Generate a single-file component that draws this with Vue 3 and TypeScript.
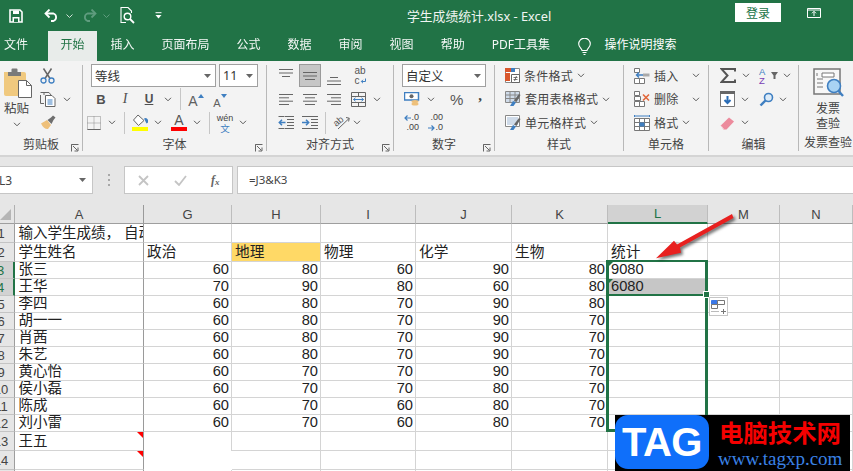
<script setup lang="ts">
import { h } from 'vue'

const Chev = () =>
  h('svg', { class: 'chev', width: 8, height: 5, viewBox: '0 0 8 5' }, [
    h('path', { d: 'M1 .8 4 3.8 7 .8', fill: 'none', stroke: '#5a5a5a', 'stroke-width': 1 }),
  ])
const Drop = () =>
  h('svg', { class: 'drop', width: 7, height: 4, viewBox: '0 0 7 4' }, [
    h('path', { d: 'M0 0h7L3.5 4z', fill: '#666' }),
  ])
const Exp = () =>
  h('svg', { class: 'exp', width: 8, height: 8, viewBox: '0 0 8 8' }, [
    h('path', { d: 'M.5 3V.5H7.5M.5 .5V7.5M2 2 6.5 6.5M3.5 7H7V3.5', fill: 'none', stroke: '#666', 'stroke-width': 1 }),
  ])

const tabs = ['插入', '页面布局', '公式', '数据', '审阅', '视图', '帮助', 'PDF工具集']
const columns = ['G', 'H', 'I', 'J', 'K', 'L', 'M', 'N']

interface Row { n: number; name: string; v: (number | string)[] }
const scores: [string, number[]][] = [
  ['张三', [60, 80, 60, 90, 80]],
  ['王华', [70, 90, 80, 60, 80]],
  ['李四', [60, 80, 70, 90, 80]],
  ['胡一一', [60, 80, 70, 90, 70]],
  ['肖茜', [60, 80, 70, 90, 70]],
  ['朱艺', [60, 80, 70, 90, 70]],
  ['黄心怡', [60, 70, 70, 90, 70]],
  ['侯小磊', [60, 70, 70, 80, 70]],
  ['陈成', [60, 70, 60, 80, 70]],
  ['刘小雷', [60, 70, 60, 80, 70]],
]
const rows: Row[] = scores.map(([name, v], i) => ({ n: i + 3, name, v }))
const heads = ['政治', '地理', '物理', '化学', '生物', '统计']
</script>

<template>
  <div class="app">
    <header class="titlebar">
      <div class="qa">
        <svg class="q-save" width="14" height="14" viewBox="0 0 14 14"><path d="M1 1h10l2 2v10H1z" fill="none" stroke="#fff" stroke-width="1.6"/><path d="M4 1.5h6v3.5H4zM3.5 8h7v5h-7z" fill="#fff"/><path d="M5 9.5h4v3.5H5z" fill="#217346"/></svg>
        <svg class="q-undo" width="15" height="13" viewBox="0 0 15 13"><path d="M2 4.5h7.5a4 4 0 0 1 0 7.5H7" fill="none" stroke="#fff" stroke-width="1.8"/><path d="M5.5 .5 1.5 4.5l4 4" fill="none" stroke="#fff" stroke-width="1.8"/></svg>
        <svg class="q-c1" width="7" height="4" viewBox="0 0 7 4"><path d="M.5 .5 3.5 3.5 6.5 .5" fill="none" stroke="#cfe0d6"/></svg>
        <svg class="q-redo" width="15" height="13" viewBox="0 0 15 13"><path d="M13 4.5H5.5a4 4 0 0 0 0 7.5H8" fill="none" stroke="#5f9c7e" stroke-width="1.8"/><path d="M9.500 .5l4 4-4 4" fill="none" stroke="#5f9c7e" stroke-width="1.8"/></svg>
        <svg class="q-c2" width="7" height="4" viewBox="0 0 7 4"><path d="M.5 .5 3.5 3.5 6.5 .5" fill="none" stroke="#5f9c7e"/></svg>
        <svg class="q-prev" width="15" height="17" viewBox="0 0 15 17"><path d="M6 15.500H1V.5h7l3.500 3.500v2" fill="none" stroke="#fff" stroke-width="1.1"/><circle cx="7.500" cy="9.500" r="3.300" fill="none" stroke="#fff" stroke-width="1.4"/><path d="M10 12l4 4" stroke="#fff" stroke-width="1.8"/></svg>
        <svg class="q-cust" width="7" height="7" viewBox="0 0 7 7"><path d="M.5 .7h6" stroke="#fff"/><path d="M.5 3h6L3.500 6.500z" fill="#fff"/></svg>
      </div>
      <div class="doc">学生成绩统计.xlsx  -  Excel</div>
      <button class="login">登录</button>
      <svg class="win" width="14" height="10" viewBox="0 0 14 10"><path d="M.5 .5h13v9H.5zM.5 2h13M7 8V3.500M5 5.300l2-2 2 2" fill="none" stroke="#fff"/></svg>
    </header>

    <nav class="tabs">
      <span class="tab first">文件</span>
      <span class="tab active">开始</span>
      <span v-for="t in tabs" :key="t" class="tab">{{ t }}</span>
      <svg class="bulb" width="13" height="18" viewBox="0 0 13 18"><path d="M4 12.500c0-2-3.300-3.300-3.300-6.500a5.800 5.800 0 0 1 11.600 0c0 3.200-3.300 4.500-3.300 6.500zM4.500 14.500h4M5.500 16.500h2" fill="none" stroke="#fff" stroke-width="1.1"/></svg>
      <span class="search">操作说明搜索</span>
    </nav>

    <section class="ribbon">
      <!-- clipboard -->
      <div class="group g-clip">
        <div class="body clip">
          <div class="paste">
            <svg width="30" height="33" viewBox="0 0 30 33"><path d="M3 6h20a2 2 0 0 1 2 2v22H5a2 2 0 0 1-2-2z" transform="translate(-2 0)" fill="#f0c97f"/><path d="M5 10V6h3.500V3.500a1 1 0 0 1 1-1h4a1 1 0 0 1 1 1V6H18v4z" fill="#7a7a7a"/><path d="M15.500 14.500h8l5 5v12h-13z" fill="#fff" stroke="#666"/><path d="M23.500 14.500v5h5" fill="none" stroke="#666"/></svg>
            <span class="paste-t">粘贴</span>
            <Chev />
          </div>
          <div class="tools">
            <div class="tl"><svg width="15" height="16" viewBox="0 0 15 16"><path d="M3.500 .5 10 10.500M11.500 .5 5 10.500" stroke="#666" stroke-width="1.5"/><circle cx="3.500" cy="12.500" r="2.500" fill="none" stroke="#3f7fc1" stroke-width="1.3"/><circle cx="11.500" cy="12.500" r="2.500" fill="none" stroke="#3f7fc1" stroke-width="1.3"/></svg></div>
            <div class="tl"><svg width="16" height="15" viewBox="0 0 16 15"><path d="M4 3V.5h5L11 3M4 11.500H.5V3" fill="none" stroke="#666"/><path d="M.5 .5h4M5.500 3.500h6.500l3 3v8H5.500z" fill="#fff" stroke="#666"/><path d="M7.500 8h5M7.500 10h5M7.500 12h5" stroke="#3f7fc1"/></svg><Chev class="cml" /></div>
            <div class="tl"><svg width="16" height="15" viewBox="0 0 16 15"><path d="M1 8.500 7 5l4 5-3 4c-2 .5-5-1-7-5.500z" fill="#eec07a"/><path d="M7.500 5 11 2.500 13 .5l2.500 2-2 2.500-2 4z" fill="#6e6e6e"/></svg></div>
          </div>
        </div>
        <div class="lbl"><i /><span>剪贴板</span><Exp /></div>
      </div>
      <div class="vsep" />

      <!-- font -->
      <div class="group g-font">
        <div class="body rows">
          <div class="row r-font">
            <div class="select s-name"><span>等线</span><Drop /></div>
            <div class="select s-size"><span>11</span><Drop /></div>
          </div>
          <div class="row pl6">
            <span class="sl24 b">B</span><span class="sl24 it">I</span><span class="sl24 un">U</span>
            <span class="sl14"><Chev /></span><span class="rsep ml5" />
            <span class="sl24 ml3 bigA">A<svg class="tri" width="6" height="4" viewBox="0 0 6 4"><path d="M3 0l3 4H0z" fill="#3f7fc1"/></svg></span>
            <span class="sl24 smallA">A<svg class="tri" width="6" height="4" viewBox="0 0 6 4"><path d="M0 0h6L3 4z" fill="#3f7fc1"/></svg></span>
          </div>
          <div class="row">
            <span class="sl21"><svg width="14" height="14" viewBox="0 0 14 14"><path d="M.5 .5h13v13H.5zM7 .5v13M.5 7h13" fill="none" stroke="#8a8a8a" stroke-dasharray="1 1"/><path d="M.5 13.500h13" stroke="#666"/></svg></span>
            <span class="sl14 ml1"><Chev /></span><span class="rsep ml5" />
            <span class="color ml7"><svg width="16" height="13" viewBox="0 0 16 13"><path d="M6 1 1.500 6l5 5.500L12 6.500z" fill="#fff" stroke="#666"/><path d="M12 4.500a2.800 2.800 0 1 1 2.500 5z" fill="#3f7fc1"/></svg><i class="bar yellow" /></span>
            <span class="sl14 ml3"><Chev /></span>
            <span class="color ml6"><b class="colA">A</b><i class="bar red" /></span>
            <span class="sl14 ml3"><Chev /></span><span class="rsep ml5" />
            <span class="wen ml7"><small>wén</small><em>文</em></span>
            <span class="sl14 ml3"><Chev /></span>
          </div>
        </div>
        <div class="lbl"><i /><span>字体</span><Exp /></div>
      </div>
      <div class="vsep" />

      <!-- alignment -->
      <div class="group g-align">
        <div class="body rows">
          <div class="row pl7">
            <span class="sl24 atop"><svg width="14" height="8" viewBox="0 0 14 8"><path d="M0 .5h14M0 4h14M3 7.500h8" stroke="#666"/></svg></span>
            <span class="sl24"><span class="abox"><svg width="14" height="8" viewBox="0 0 14 8"><path d="M0 .5h14M0 4h14M2 7.500h10" stroke="#666"/></svg></span></span>
            <span class="sl24 abot"><svg width="14" height="8" viewBox="0 0 14 8"><path d="M3 .5h8M0 4h14M0 7.500h14" stroke="#666"/></svg></span>
            <span class="sl24 ml2 wrap"><span>ab</span><span>c<svg width="6" height="6" viewBox="0 0 6 6"><path d="M5.500 .5v3h-4M3 1.800 1.300 3.500 3 5.200" fill="none" stroke="#3f7fc1"/></svg></span></span>
          </div>
          <div class="row pl7">
            <span class="sl24"><svg width="14" height="11" viewBox="0 0 14 11"><path d="M0 .5h14M0 3.800h10M0 7.200h14M0 10.500h10" stroke="#666"/></svg></span>
            <span class="sl24"><svg width="14" height="11" viewBox="0 0 14 11"><path d="M0 .5h14M2 3.800h10M0 7.200h14M2 10.500h10" stroke="#666"/></svg></span>
            <span class="sl24"><svg width="14" height="11" viewBox="0 0 14 11"><path d="M0 .5h14M4 3.800h10M0 7.200h14M4 10.500h10" stroke="#666"/></svg></span>
            <svg class="ml5" width="15" height="15" viewBox="0 0 15 15"><path d="M.5 .5h14v14H.5zM.5 4.500h14M.5 10.500h14M7.500 .5v4M7.500 10.500v4" fill="none" stroke="#666"/><path d="M2.500 7.500h10M4.500 5.800 2.500 7.500l2 1.700M10.500 5.800l2 1.700-2 1.700" fill="none" stroke="#3f7fc1"/></svg>
            <Chev class="ml7" />
          </div>
          <div class="row pl7">
            <span class="sl24"><svg width="16" height="13" viewBox="0 0 16 13"><path d="M7 .5h9M9 3.500h7M9 6.500h7M9 9.500h7M7 12.500h9M.5 12.500h6M.5 .5h6" stroke="#666"/><path d="M7.500 6.500H1.500M4 3.800 1.300 6.500 4 9.200" fill="none" stroke="#3f7fc1" stroke-width="1.5"/></svg></span>
            <span class="sl24"><svg width="16" height="13" viewBox="0 0 16 13"><path d="M0 .5h16M9 3.500h7M9 6.500h7M9 9.500h7M0 12.500h16" stroke="#666"/><path d="M0 6.500h6.500M4 3.800l2.700 2.700L4 9.200" fill="none" stroke="#3f7fc1" stroke-width="1.5"/></svg></span>
            <span class="rsep ml3" />
            <svg class="ml7 orient-i" width="17" height="15" viewBox="0 0 17 15"><path d="M5 14 16 3.500M13 2.500l3.300.7-.7 3.300" fill="none" stroke="#666"/><text x="1" y="10" transform="rotate(-40 5 8)" class="orient">ab</text></svg>
            <Chev class="ml3" />
          </div>
        </div>
        <div class="lbl"><i /><span>对齐方式</span><Exp /></div>
      </div>
      <div class="vsep" />

      <!-- number -->
      <div class="group g-num">
        <div class="body rows">
          <div class="row"><div class="select s-num"><span>自定义</span><Drop /></div></div>
          <div class="row pl10">
            <svg width="16" height="14" viewBox="0 0 16 14"><path d="M.5 .5h14v7.500H.5z" fill="#fff" stroke="#3f7fc1" stroke-width="1.5"/><circle cx="7.500" cy="4.300" r="2" fill="#666"/><ellipse cx="11" cy="9.500" rx="3.500" ry="1.500" fill="#eec07a"/><ellipse cx="11" cy="12" rx="3.500" ry="1.500" fill="#eec07a"/></svg>
            <Chev class="ml7" />
            <span class="pct">%</span><span class="comma">,</span>
          </div>
          <div class="row pl10">
            <span class="dec"><span><svg width="7" height="6" viewBox="0 0 7 6"><path d="M7 3H1M3.500 .5 1 3l2.500 2.500" fill="none" stroke="#3f7fc1" stroke-width="1.2"/></svg>.0</span><span>.00</span></span>
            <span class="dec ml9"><span>.00</span><span><svg width="7" height="6" viewBox="0 0 7 6"><path d="M0 3h6M3.500 .5 6 3 3.500 5.500" fill="none" stroke="#3f7fc1" stroke-width="1.2"/></svg>.0</span></span>
          </div>
        </div>
        <div class="lbl"><i /><span>数字</span><Exp /></div>
      </div>
      <div class="vsep" />

      <!-- styles -->
      <div class="group g-style">
        <div class="body rows">
          <div class="row item"><svg width="15" height="15" viewBox="0 0 15 15"><path d="M.5 .5h14v14H.5z" fill="#fff" stroke="#888"/><path d="M0 0h10v4H0zM0 5h5v8H0z" fill="#d9572c"/><path d="M6 0h4v4H6z" fill="#3f7fc1"/><path d="M6.500 6.500h8v8h-8z" fill="#fff" stroke="#666"/><path d="M8.500 9.500h4M8.500 11.500h4M9.500 13l2-5" stroke="#555" stroke-width=".8"/></svg><span>条件格式</span><Chev /></div>
          <div class="row item"><svg width="16" height="16" viewBox="0 0 16 16"><path d="M.5 .5h14v11H.5zM.5 4h14M.5 7.500h14M5 .5v11M10 .5v11" fill="#cfdbe9" stroke="#888"/><path d="M5 15l3-5 3 1.500L8.500 15z" fill="#3f7fc1"/><path d="M9 9.500 14 3l1.500 1-4 7z" fill="#666"/></svg><span>套用表格格式</span><Chev /></div>
          <div class="row item"><svg width="16" height="16" viewBox="0 0 16 16"><path d="M.5 .5h14v11H.5z" fill="#fff" stroke="#888"/><path d="M2 2h11v8H2z" fill="#cfdbe9"/><path d="M5 15l3-5 3 1.500L8.500 15z" fill="#3f7fc1"/><path d="M9 9.500 14 3l1.500 1-4 7z" fill="#666"/></svg><span>单元格样式</span><Chev /></div>
        </div>
        <div class="lbl"><i /><span>样式</span><i /></div>
      </div>
      <div class="vsep" />

      <!-- cells -->
      <div class="group g-cells">
        <div class="body rows">
          <div class="row item"><svg width="16" height="16" viewBox="0 0 16 16"><path d="M.5 .5h5v4h-5zM.5 10.500h5v5h-5zM5.500 10.500h5v5h-5z" fill="#fff" stroke="#777"/><path d="M9 5.500h6.500v3H9z" fill="#aaa"/><path d="M9 7H2.500M5 4.500 2.500 7 5 9.500" fill="none" stroke="#3f7fc1" stroke-width="1.4"/></svg><span>插入</span><Chev class="ml10" /></div>
          <div class="row item"><svg width="16" height="16" viewBox="0 0 16 16"><path d="M.5 .5h5v4h-5zM.5 10.500h5v5h-5zM5.500 10.500h5v5h-5zM.5 5.500h6v4h-6z" fill="#fff" stroke="#777"/><path d="M9 3.500l6 6M15 3.500l-6 6" stroke="#e2683c" stroke-width="1.6"/></svg><span>删除</span><Chev class="ml10" /></div>
          <div class="row item"><svg width="16" height="16" viewBox="0 0 16 16"><path d="M.5 3.500h15v12H.5zM.5 7.500h15M.5 11.500h15M5.500 3.500v12M10.500 3.500v12" fill="#fff" stroke="#777"/><path d="M5.500 7.500h5v4h-5z" fill="#3f7fc1"/><path d="M1 1h14M.5 0v2M15.500 0v2" stroke="#3f7fc1"/></svg><span>格式</span><Chev /></div>
        </div>
        <div class="lbl"><i /><span>单元格</span><i /></div>
      </div>
      <div class="vsep" />

      <!-- editing -->
      <div class="group g-edit">
        <div class="body rows">
          <div class="row">
            <span class="e1"><svg width="16" height="15" viewBox="0 0 16 15"><path d="M15 3.500V1H1.500l6 6.500-6 6.500H15v-2.500" fill="none" stroke="#555" stroke-width="2"/></svg><Chev /></span>
            <span class="e2"><span class="az"><span>A</span><span>Z</span></span><svg width="7" height="7" viewBox="0 0 7 7"><path d="M0 0h7L4.500 3.500V7h-2V3.500z" fill="#666"/></svg><Chev class="ml5" /></span>
          </div>
          <div class="row">
            <span class="e1"><svg width="15" height="16" viewBox="0 0 15 16"><path d="M.5 .5h14v15H.5z" fill="#fff" stroke="#777"/><path d="M0 0h15v3H0z" fill="#666"/><path d="M7.500 5v7M4.500 9l3 3 3-3" fill="none" stroke="#2a6cb5" stroke-width="2"/></svg><Chev /></span>
            <span class="e2 find"><svg width="15" height="15" viewBox="0 0 15 15"><circle cx="9.500" cy="5.500" r="4" fill="#dcebf8" stroke="#3f7fc1" stroke-width="1.6"/><path d="M6.500 8.500 1.500 13.500" stroke="#3f7fc1" stroke-width="2.4"/></svg><Chev class="ml5" /></span>
          </div>
          <div class="row">
            <span class="e1"><svg width="15" height="14" viewBox="0 0 15 14"><path d="M.8 9.500 9 1.500l5 4-7.500 8H3.500z" fill="#ec8a9c"/><path d="M.8 9.500l3 3.500" stroke="#f6c4cd"/></svg><Chev /></span>
          </div>
        </div>
        <div class="lbl"><i /><span>编辑</span><i /></div>
      </div>
      <div class="vsep" />

      <!-- invoice -->
      <div class="group g-inv">
        <div class="body inv">
          <svg width="31" height="30" viewBox="0 0 31 30"><path d="M1 1h26v25H1z" fill="#f7f7f7" stroke="#777" stroke-width="1.5"/><path d="M9 5h12v4H9z" fill="#fff" stroke="#777"/><path d="M4 5v3M4 11h6M4 15h6M4 19h6" stroke="#777"/><circle cx="21" cy="18" r="6.500" fill="#a9d3f3" stroke="#3f7fc1" stroke-width="1.6"/><path d="M25.500 23 30 28" stroke="#3f7fc1" stroke-width="2.4"/></svg>
          <span class="inv-t">发票<br />查验</span>
        </div>
        <div class="lbl inv-l"><span>发票查验</span></div>
      </div>
    </section>

    <section class="fbar">
      <div class="namebox"><span>L3</span><Drop /></div>
      <div class="dots"><i /><i /><i /></div>
      <div class="fbtns">
        <svg width="11" height="11" viewBox="0 0 11 11"><path d="M1 1l9 9M10 1l-9 9" stroke="#c4c4c4" stroke-width="1.8"/></svg>
        <svg width="13" height="11" viewBox="0 0 13 11"><path d="M1 6l4 4 7-9" fill="none" stroke="#c4c4c4" stroke-width="1.8"/></svg>
        <span class="fx">f<sub>x</sub></span>
      </div>
      <div class="finput">=J3&amp;K3</div>
    </section>

    <section class="sheet">
      <div class="hd corner"><svg width="11" height="11" viewBox="0 0 11 11"><path d="M11 0v11H0z" fill="#b5b5b5"/></svg></div>
      <div class="hd colh dark">A</div>
      <div v-for="c in columns" :key="c" class="hd colh" :class="{ sel: c === 'L' }">{{ c }}</div>
      <div class="hd colh last" />

      <div class="hd rowh">1</div>
      <div class="c a over">输入学生成绩， 自动</div>
      <div v-for="c in columns" :key="'r1' + c" class="c" />
      <div class="c" />

      <div class="hd rowh">2</div>
      <div class="c a">学生姓名</div>
      <div v-for="(t, i) in heads" :key="t" class="c" :class="{ yellowc: i === 1 }">{{ t }}</div>
      <div class="c" /><div class="c" /><div class="c" />

      <template v-for="r in rows" :key="r.n">
        <div class="hd rowh" :class="{ rsel: r.n < 5 }">{{ r.n }}</div>
        <div class="c a">{{ r.name }}</div>
        <div v-for="(v, i) in r.v" :key="i" class="c num">{{ v }}</div>
        <div class="c" :class="{ tick: r.n < 5, picked: r.n === 4 }">{{ r.n === 3 ? '9080' : r.n === 4 ? '6080' : '' }}</div>
        <div class="c" /><div class="c" /><div class="c" />
      </template>

      <div class="hd rowh">13</div>
      <div class="c a flag">王五</div>
      <div class="c nob" />
      <div v-for="c in 7" :key="'r13' + c" class="c" />
      <div class="c" />

      <div class="hd rowh">14</div>
      <div class="c a flag" />
      <div class="c nob nor" />
      <div v-for="c in 7" :key="'r14' + c" class="c" />
      <div class="c" />

      <div class="hd rowh">15</div>
      <div class="c a" />
      <div v-for="c in 9" :key="'r15' + c" class="c" />
    </section>

    <div class="selection" />
    <div class="selection2" />
    <div class="handle" />
    <div class="quick">
      <svg width="15" height="14" viewBox="0 0 15 14"><path d="M.5 .5h6v4h-6z" fill="#3b78e7" stroke="#3b78e7"/><path d="M6.500 .5h7v4h-7zM.5 4.500h6v4h-6z" fill="#fff" stroke="#777"/><path d="M.5 11.500h8" stroke="#777" stroke-dasharray="1 1"/><path d="M10 11.500h5M12.500 9v5" stroke="#777"/></svg>
    </div>

    <svg class="arrow" width="90" height="56" viewBox="650 208 90 56"><path d="M732 214 733.500 218 680 247.500 681 252.700 656 258.300 674 240.700 677 244.500z" fill="#e8201f"/></svg>

    <aside class="wm">
      <div class="wm-logo">TAG</div>
      <div class="wm-text">
        <div class="wm-cn">电脑技术网</div>
        <div class="wm-en">www.tagxp.com</div>
      </div>
    </aside>
  </div>
</template>

<style scoped>
.app { position: relative; width: 853px; height: 471px; overflow: hidden; background: #e6e6e6; font-family: "Noto Sans", "Noto Sans CJK SC", sans-serif; color: #444; }
svg { display: block; flex: none; }

.titlebar { height: 31px; background: #217346; display: flex; align-items: center; color: #fff; }
.qa { width: 407px; display: flex; align-items: center; padding-left: 9px; box-sizing: border-box; }
.q-undo { margin-left: 21px; }
.q-c1 { margin-left: 7px; }
.q-redo { margin-left: 9px; }
.q-c2 { margin-left: 6px; }
.q-prev { margin-left: 10px; }
.q-cust { margin-left: 20px; }
.doc { width: 328px; font-size: 12.800px; white-space: pre; color: #f0f5f2; }
.login { width: 46px; height: 19px; padding: 0; border: 0; background: #fff; color: #217346; font: 12px "Noto Sans CJK SC", sans-serif; margin-top: -6px; }
.win { margin-left: 26px; margin-top: -6px; }

.tabs { height: 30px; background: #217346; display: flex; align-items: stretch; color: #fff; font-size: 12px; }
.tab { padding: 0 13.500px; line-height: 28px; opacity: .95; }
.tab.first { padding: 0 20px 0 4px; }
.tab.active { background: #f3f3f3; color: #217346; padding: 0 12.500px; }
.bulb { margin: 7px 0 0 15px; }
.search { margin-left: 13px; line-height: 28px; }

.ribbon { height: 94px; background: #f3f3f3; border-bottom: 2px solid #d4d4d4; display: flex; align-items: stretch; font-size: 12px; box-sizing: content-box; }
.group { display: flex; flex-direction: column; height: 94px; }
.g-clip { width: 82px; }
.g-font { width: 183px; }
.g-align { width: 126px; }
.g-num { width: 100px; }
.g-style { width: 128px; }
.g-cells { width: 84px; }
.g-edit { width: 89px; }
.g-inv { width: 54px; }
.vsep { width: 1px; margin: 4px 0 4px; background: #b8b8b8; }
.body { height: 74px; box-sizing: border-box; }
.lbl { height: 20px; display: grid; grid-template-columns: 1fr auto 1fr; align-items: center; color: #444; line-height: 16px; }
.exp { justify-self: end; margin: 6px 3px 0 0; }

.clip { display: flex; padding-left: 1px; }
.paste { width: 31px; display: flex; flex-direction: column; align-items: center; padding-top: 5px; }
.paste svg:first-child { margin-left: 3px; }
.paste-t { font-size: 12.500px; line-height: 14px; margin-top: 3px; }
.paste .chev { margin-top: 6px; }
.tools { margin-left: 8px; display: grid; grid-auto-rows: 23.500px; padding-top: 3px; }
.tl { display: flex; align-items: center; }
.cml { margin-left: 7px; }

.rows { display: grid; grid-auto-rows: 23.500px; padding-top: 3px; }
.row { display: flex; align-items: center; }
.pl6 { padding-left: 6px; }
.pl7 { padding-left: 7px; }
.pl10 { padding-left: 10px; }
.ml1 { margin-left: 1px; }
.ml2 { margin-left: 2px; }
.ml3 { margin-left: 3px; }
.ml5 { margin-left: 5px; }
.ml6 { margin-left: 6px; }
.ml7 { margin-left: 7px; }
.ml9 { margin-left: 9px; }
.ml10 { margin-left: 10px; }
.sl24 { width: 24px; display: flex; justify-content: center; align-items: center; flex: none; }
.sl21 { width: 21px; display: flex; justify-content: center; flex: none; }
.sl14 { width: 14px; display: flex; justify-content: center; flex: none; }
.rsep { width: 1px; height: 22px; background: #c6c6c6; flex: none; }

.select { height: 23px; box-sizing: border-box; background: #fff; border: 1px solid #a0a0a0; display: flex; align-items: center; justify-content: space-between; padding: 0 4px 0 3px; color: #333; font-size: 12.500px; }
.r-font { padding-left: 8px; gap: 3px; }
.s-name { width: 125px; }
.s-size { width: 39px; }
.s-num { width: 84px; margin-left: 8px; }

.b { font: 700 13px "Liberation Sans", sans-serif; color: #505050; }
.it { font: italic 14px "Liberation Serif", serif; color: #505050; }
.un { font: 700 12px "Liberation Sans", sans-serif; color: #505050; text-decoration: underline; }
.bigA, .smallA { font-family: "Liberation Sans", sans-serif; color: #606060; align-items: flex-end; height: 20px; }
.bigA { font-size: 14px; }
.smallA { font-size: 11px; }
.tri { margin: 0 0 11px 0; }
.color { width: 16px; display: flex; flex-direction: column; align-items: center; flex: none; }
.bar { width: 16px; height: 4px; display: block; }
.yellow { background: #ffff00; }
.red { background: #ff0000; }
.colA { font: 400 14px/13px "Liberation Sans", sans-serif; color: #555; height: 13px; }
.wen { width: 16px; display: flex; flex-direction: column; align-items: center; flex: none; line-height: 10px; }
.wen small { font: 9px/10px "Liberation Sans", sans-serif; color: #444; }
.wen em { font: normal 9.500px/10px "Noto Sans CJK SC", sans-serif; color: #3f7fc1; }

.atop { align-self: flex-start; padding-top: 5px; }
.abot { align-self: flex-end; padding-bottom: 3px; }
.abox { width: 22px; height: 23px; box-sizing: border-box; background: #c6c6c6; border: 1px solid #9a9a9a; display: flex; align-items: center; justify-content: center; }
.wrap { flex-direction: column; align-items: center; font: 10px/10px "Liberation Sans", sans-serif; color: #555; }
.wrap span { display: flex; align-items: center; }
.orient-i { overflow: visible; }
.orient { font: 9.500px "Liberation Sans", sans-serif; fill: #555; }

.pct { margin-left: 15px; font: 15px "Liberation Sans", sans-serif; color: #555; }
.comma { margin-left: 15px; font: 700 15px/10px "Liberation Serif", serif; color: #444; padding-bottom: 8px; }
.dec { display: flex; flex-direction: column; width: 15px; font: 9px/9.500px "Liberation Sans", sans-serif; color: #444; align-items: flex-end; }
.dec span { display: flex; align-items: center; }

.item { padding-left: 10px; gap: 4px; letter-spacing: .22px; }
.item .ml10 { margin-left: 10px; }

.e1 { width: 39px; padding-left: 11px; display: flex; align-items: center; gap: 6px; }
.e2 { display: flex; align-items: center; }
.az { display: flex; flex-direction: column; width: 10px; margin-right: 2px; font: 9.500px/9px "Liberation Sans", sans-serif; color: #3f7fc1; }
.az span:last-child { color: #7a3fb5; }

.inv { display: flex; flex-direction: column; align-items: center; padding: 7px 0 0 4px; }
.inv-t { text-align: center; line-height: 14.500px; margin-top: 4px; }
.inv-l { display: block; text-align: center; padding-left: 4px; white-space: nowrap; }

.fbar { height: 28px; margin-top: 9px; display: flex; align-items: stretch; }
.namebox { width: 93px; background: #fff; border: 1px solid #c6c6c6; border-left: 0; box-sizing: border-box; display: flex; align-items: center; justify-content: space-between; padding-right: 6px; font-size: 12px; text-indent: -1px; color: #444; }
.dots { width: 31px; display: flex; flex-direction: column; align-items: center; justify-content: center; gap: 3px; }
.dots i { width: 2px; height: 2px; background: #a8a8a8; display: block; }
.fbtns { width: 109px; box-sizing: border-box; background: #fff; border: 1px solid #c6c6c6; display: flex; align-items: center; padding-left: 13px; gap: 25px; }
.fx { font: italic 700 12px "Liberation Serif", serif; color: #666; margin-left: -1px; }
.fx sub { font-size: 9px; vertical-align: -1px; }
.finput { flex: 1; margin-left: 4px; background: #fff; border: 1px solid #c6c6c6; border-right: 0; padding-left: 11px; line-height: 26px; font-size: 11.500px; color: #444; }

.sheet { margin: 11px 0 0 -12px; display: grid; grid-template-columns: 27px 129px 88px 89px 95px 96px 96px 100px 72px 73px 20px; grid-template-rows: 19px 19px 19px repeat(10, 17px) 19px 19px 20px; width: 885px; background: #fff; font: 14.670px/17px "Liberation Sans", "Noto Sans CJK SC", sans-serif; color: #222; }
.hd { background: #e6e6e6; box-sizing: border-box; font-size: 13px; color: #444; display: flex; align-items: center; justify-content: center; }
.corner { justify-content: flex-end; align-items: flex-end; padding: 0 3px 3px 0; border-right: 1px solid #b0b0b0; border-bottom: 1px solid #9e9e9e; }
.colh { border-right: 1px solid #bdbdbd; border-bottom: 1px solid #9e9e9e; }
.colh.dark { border-right-color: #9a9a9a; }
.colh.sel { background: #d2d2d2; border-bottom: 2px solid #217346; color: #217346; }
.rowh { border-right: 1px solid #9e9e9e; border-bottom: 1px solid #c4c4c4; }
.rsel { background: #d2d2d2; color: #217346; border-right: 2px solid #217346; }
.c { box-sizing: border-box; position: relative; border-right: 1px solid #d4d4d4; border-bottom: 1px solid #d4d4d4; padding: 0 3px; display: flex; align-items: flex-end; white-space: nowrap; overflow: hidden; min-width: 0; }
.c.a { border-right-color: #9a9a9a; padding-left: 3.500px; font-size: 14.500px; }
.num { justify-content: flex-end; padding-right: 2px; }
.yellowc { background: #ffd966; }
.nob { border-bottom: 0; }
.nor { border-right: 0; }
.picked { background: #c6c6c6; }
.tick::before { content: ""; position: absolute; left: 0; top: 0; border-style: solid; border-width: 5px 5px 0 0; border-color: #217346 transparent transparent transparent; }
.flag::after { content: ""; position: absolute; right: 0; top: 0; border-style: solid; border-width: 0 6px 6px 0; border-color: transparent #f00 transparent transparent; }

.selection { position: absolute; left: 606px; top: 260px; width: 102px; height: 171.500px; box-sizing: border-box; border: 3px solid #217346; border-width: 2.500px 3px 3px; pointer-events: none; }
.selection2 { position: absolute; left: 608px; top: 294px; width: 98px; height: 1.500px; background: #217346; }
.handle { position: absolute; left: 704px; top: 292px; width: 5px; height: 5px; background: #217346; outline: 1px solid #fff; }
.quick { position: absolute; left: 709px; top: 297px; width: 19px; height: 19px; box-sizing: border-box; background: #fff; border: 1px solid #c6c6c6; display: flex; align-items: center; justify-content: center; }
.arrow { position: absolute; left: 650px; top: 208px; filter: drop-shadow(2px 2px 1.500px rgba(0,0,0,.55)); overflow: visible; }

.wm { position: absolute; left: 615px; top: 415px; width: 235px; height: 56px; background: #000; display: flex; }
.wm-logo { width: 94px; height: 54px; background: #0f6ffa; border-radius: 13px; color: #fff; font: 700 40px/55px "Liberation Sans", sans-serif; text-align: center; letter-spacing: -.5px; }
.wm-text { display: flex; flex-direction: column; margin-left: 9px; }
.wm-cn { font: 700 24.400px/30px "Noto Sans CJK SC", sans-serif; color: #f50000; white-space: nowrap; margin-top: 2px; margin-left: 1px; }
.wm-en { font: 19px/20px "Liberation Serif", serif; color: #3b82e6; margin-top: 2px; white-space: nowrap; }
</style>
